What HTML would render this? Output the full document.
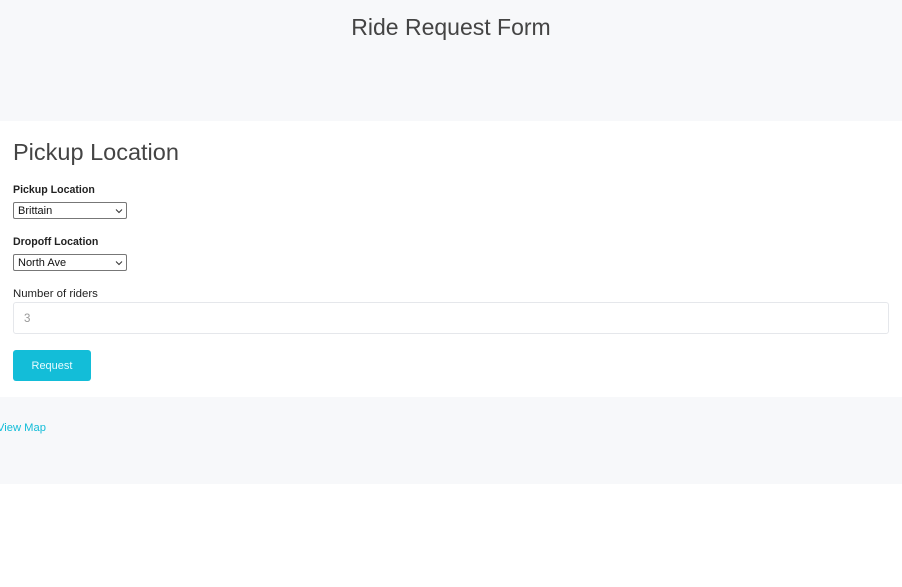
<!DOCTYPE html>
<html><head><meta charset="utf-8"><style>
*{box-sizing:border-box;margin:0;padding:0}
body{width:902px;height:587px;background:#fff;font-family:"Liberation Sans",sans-serif;color:#212529;position:relative;overflow:hidden}
.hdr{position:absolute;left:0;top:0;width:902px;height:121px;background:#f7f8fa}
.hdr h1{position:absolute;top:14px;width:100%;text-align:center;font-weight:normal;font-size:23px;color:#444}
h2{position:absolute;left:13px;top:139px;font-weight:normal;font-size:23.5px;color:#444}
.lbl{position:absolute;left:13px;font-size:10.6px;font-weight:bold;color:#222}
.sel{position:absolute;left:13px;width:114px;height:17px;border:1px solid #777;border-radius:2px;font-size:11px;padding:2px 0 0 4px;color:#111;background:#fff}
.sel svg{position:absolute;right:3px;top:5px}
.n{position:absolute;left:13px;top:288px;font-size:11.4px;color:#222}
.inp{position:absolute;left:13px;top:302px;width:876px;height:32px;border:1px solid #e5e7eb;border-radius:3px;font-size:11.5px;color:#999;padding:10px 0 0 10px}
.btn{position:absolute;left:13px;top:350px;width:78px;height:31px;background:#13bdd8;border-radius:3px;color:#e8fbff;font-size:11px;text-align:center;line-height:32px}
.ftr{position:absolute;left:0;top:397px;width:902px;height:87px;background:#f7f8fa}
.ftr a{position:absolute;left:-3px;top:25px;font-size:11.2px;color:#13bdd8;text-decoration:none}
</style></head><body>
<div class="hdr"><h1>Ride Request Form</h1></div>
<h2>Pickup Location</h2>
<div class="lbl" style="top:184px">Pickup Location</div>
<div class="sel" style="top:202px">Brittain<svg width="8" height="6" viewBox="0 0 8 6"><path d="M1 1.5L4 4.5L7 1.5" stroke="#333" fill="none" stroke-width="1"/></svg></div>
<div class="lbl" style="top:236px">Dropoff Location</div>
<div class="sel" style="top:254px">North Ave<svg width="8" height="6" viewBox="0 0 8 6"><path d="M1 1.5L4 4.5L7 1.5" stroke="#333" fill="none" stroke-width="1"/></svg></div>
<div class="n">Number of riders</div>
<div class="inp">3</div>
<div class="btn">Request</div>
<div class="ftr"><a>View Map</a></div>
</body></html>
